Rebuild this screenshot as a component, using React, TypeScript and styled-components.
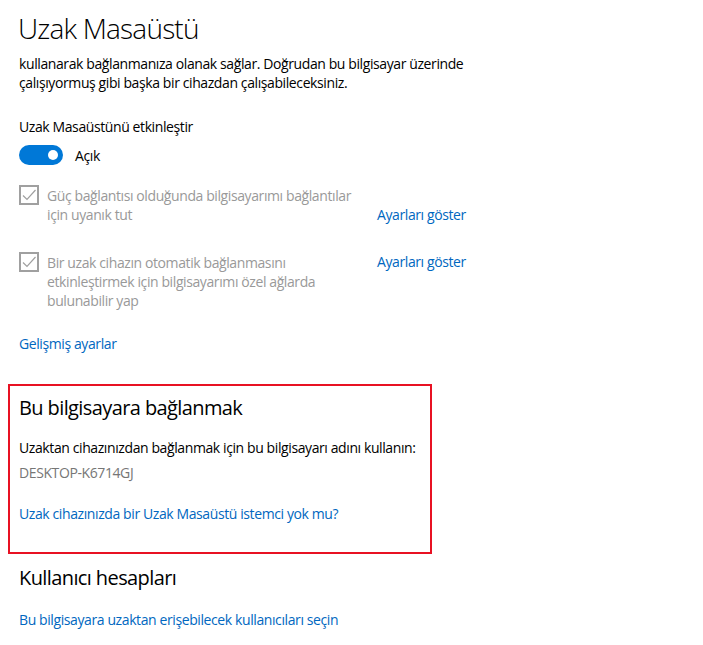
import React from "react";
import styled, { createGlobalStyle } from "styled-components";

const GlobalStyle = createGlobalStyle`
  html, body {
    margin: 0;
    padding: 0;
    background: #ffffff;
  }
  body {
    font-family: "Open Sans", "Noto Sans", sans-serif;
    color: #000000;
  }
`;

const Page = styled.div`
  width: 703px;
  height: 645px;
  overflow: hidden;
  padding: 8px 0 0 19px;
  box-sizing: border-box;
  font-size: 14px;
  line-height: 19px;
  letter-spacing: -0.4px;
`;

const Title = styled.h1`
  margin: 0 0 0 -1px;
  font-size: 28px;
  line-height: 40px;
  font-weight: 300;
  letter-spacing: -0.8px;
`;

const Paragraph = styled.p`
  margin: 6px 0 0;
  white-space: nowrap;
`;

const Label = styled.div`
  margin-top: 25px;
`;

const ToggleRow = styled.div`
  display: flex;
  align-items: center;
  gap: 12px;
  margin-top: 9px;
`;

const Toggle = styled.div<{ $on?: boolean }>`
  width: 44px;
  height: 20px;
  border-radius: 10px;
  background: ${(p) => (p.$on ? "#0078d7" : "#ffffff")};
  display: flex;
  align-items: center;
  justify-content: ${(p) => (p.$on ? "flex-end" : "flex-start")};
  padding: 0 5px;
  box-sizing: border-box;
`;

const Knob = styled.span`
  width: 10px;
  height: 10px;
  border-radius: 50%;
  background: #ffffff;
`;

const OptionRow = styled.div<{ $gap: number }>`
  display: grid;
  grid-template-columns: 358px auto;
  margin-top: ${(p) => p.$gap}px;
`;

const Option = styled.div`
  display: flex;
  align-items: flex-start;
  gap: 8px;
  color: #999999;
`;

const Box = styled.span`
  flex: none;
  width: 20px;
  height: 20px;
  border: 2px solid #a0a0a0;
  box-sizing: border-box;
  display: flex;
  align-items: center;
  justify-content: center;
`;

const OptionText = styled.span`
  padding-top: 1px;
`;

const Link = styled.a<{ $end?: boolean }>`
  color: #0067c0;
  text-decoration: none;
  align-self: ${(p) => (p.$end ? "end" : "start")};
  white-space: nowrap;
`;

const BlockLink = styled(Link)<{ $top: number }>`
  display: block;
  margin-top: ${(p) => p.$top}px;
`;

const Framed = styled.section`
  margin: 31px 0 0 -11px;
  width: 424px;
  height: 170px;
  border: 2px solid #e81123;
  box-sizing: border-box;
  padding: 8px 0 0 9px;
`;

const Subtitle = styled.h2<{ $top?: number }>`
  margin: ${(p) => p.$top ?? 0}px 0 0;
  font-size: 20px;
  line-height: 28px;
  font-weight: 400;
  letter-spacing: -0.6px;
`;

const Text = styled.div<{ $top: number }>`
  margin-top: ${(p) => p.$top}px;
  white-space: nowrap;
`;

const Muted = styled(Text)`
  color: #767676;
`;

const Check = () => (
  <svg width="16" height="16" viewBox="0 0 16 16">
    <path d="M2 8.5 L6 12.5 L14.5 3" fill="none" stroke="#a0a0a0" strokeWidth="1.2" />
  </svg>
);

export default function App() {
  return (
    <>
      <GlobalStyle />
      <Page>
        <Title>Uzak Masaüstü</Title>
        <Paragraph>
          kullanarak bağlanmanıza olanak sağlar. Doğrudan bu bilgisayar üzerinde
          <br />
          çalışıyormuş gibi başka bir cihazdan çalışabileceksiniz.
        </Paragraph>
        <Label>Uzak Masaüstünü etkinleştir</Label>
        <ToggleRow>
          <Toggle $on>
            <Knob />
          </Toggle>
          <span>Açık</span>
        </ToggleRow>
        <OptionRow $gap={20}>
          <Option>
            <Box>
              <Check />
            </Box>
            <OptionText>
              Güç bağlantısı olduğunda bilgisayarımı bağlantılar
              <br />
              için uyanık tut
            </OptionText>
          </Option>
          <Link $end>Ayarları göster</Link>
        </OptionRow>
        <OptionRow $gap={28}>
          <Option>
            <Box>
              <Check />
            </Box>
            <OptionText>
              Bir uzak cihazın otomatik bağlanmasını
              <br />
              etkinleştirmek için bilgisayarımı özel ağlarda
              <br />
              bulunabilir yap
            </OptionText>
          </Option>
          <Link>Ayarları göster</Link>
        </OptionRow>
        <BlockLink $top={24}>Gelişmiş ayarlar</BlockLink>
        <Framed>
          <Subtitle>Bu bilgisayara bağlanmak</Subtitle>
          <Text $top={16}>
            Uzaktan cihazınızdan bağlanmak için bu bilgisayarı adını kullanın:
          </Text>
          <Muted $top={6}>DESKTOP-K6714GJ</Muted>
          <BlockLink $top={22}>
            Uzak cihazınızda bir Uzak Masaüstü istemci yok mu?
          </BlockLink>
        </Framed>
        <Subtitle $top={10}>Kullanıcı hesapları</Subtitle>
        <BlockLink $top={18}>
          Bu bilgisayara uzaktan erişebilecek kullanıcıları seçin
        </BlockLink>
      </Page>
    </>
  );
}
